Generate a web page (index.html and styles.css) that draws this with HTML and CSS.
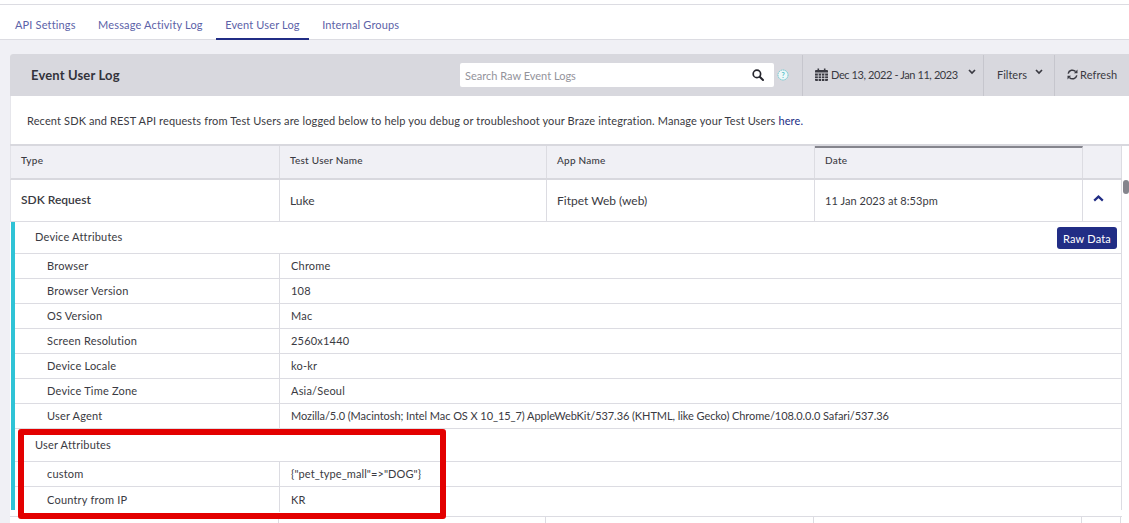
FILE: index.html
```html
<!DOCTYPE html>
<html lang="en">
<head>
    <meta charset="UTF-8">
    <title>Event User Log</title>
    <link rel="stylesheet" href="styles.css">
</head>
<body>
    <div class="top-strip"></div>
    <nav class="tabs">
        <a class="tab">API Settings</a>
        <a class="tab">Message Activity Log</a>
        <a class="tab active">Event User Log</a>
        <a class="tab">Internal Groups</a>
    </nav>
    <main class="content">
        <section class="panel">
            <header class="panel-head">
                <h1>Event User Log</h1>
                <div class="search">
                    <span class="search-text">Search Raw Event Logs</span>
                    <svg class="search-icon" width="12" height="12" viewBox="0 0 12 12"><circle cx="4.9" cy="4.9" r="3.7" fill="none" stroke="#26262e" stroke-width="1.7"/><path d="M7.7 7.7 11 11" stroke="#26262e" stroke-width="2" stroke-linecap="round"/></svg>
                </div>
                <svg class="help" width="12" height="12" viewBox="0 0 12 12"><circle cx="6" cy="6" r="5" fill="#eef8f9" stroke="#6fcbd3" stroke-width="1" stroke-dasharray="1.6 .7"/><text x="6" y="8.6" text-anchor="middle" class="help-mark">?</text></svg>
                <div class="tool tool-date">
                    <svg width="13" height="13" viewBox="0 0 13 13"><path fill="#3a3a42" d="M0 3a1 1 0 0 1 1-1h1.5V.5h1.6V2h4.8V.5h1.6V2H12a1 1 0 0 1 1 1v1.6H0zM0 5.4h13V12a1 1 0 0 1-1 1H1a1 1 0 0 1-1-1z"/><path stroke="#d8d8de" stroke-width=".8" d="M0 8h13M0 10.5h13M3.3 5.4V13M6.5 5.4V13M9.7 5.4V13"/></svg>
                    <span>Dec 13, 2022 - Jan 11, 2023</span>
                    <svg class="caret" width="8" height="6" viewBox="0 0 8 6"><path d="M1 1 4 4 7 1" fill="none" stroke="#3a3a42" stroke-width="1.7"/></svg>
                </div>
                <div class="tool tool-filters">
                    <span>Filters</span>
                    <svg class="caret" width="8" height="6" viewBox="0 0 8 6"><path d="M1 1 4 4 7 1" fill="none" stroke="#3a3a42" stroke-width="1.7"/></svg>
                </div>
                <div class="tool tool-refresh">
                    <svg width="11" height="11" viewBox="0 0 11 11"><path d="M1.2 4.6A4.3 4.3 0 0 1 8.6 2.6M9.8 6.4A4.3 4.3 0 0 1 2.4 8.4" fill="none" stroke="#3a3a42" stroke-width="1.5"/><path d="M10.5.6v3.6H6.9zM.5 10.4V6.8h3.6z" fill="#3a3a42"/></svg>
                    <span>Refresh</span>
                </div>
            </header>

            <p class="intro">Recent SDK and REST API requests from Test Users are logged below to help you debug or troubleshoot your Braze integration. Manage your Test Users <a>here.</a></p>

            <div class="table-wrap">
                <div class="table">
                    <div class="row row-head">
                        <div class="cell">Type</div>
                        <div class="cell">Test User Name</div>
                        <div class="cell">App Name</div>
                        <div class="cell cell-sorted">Date</div>
                        <div class="cell"></div>
                    </div>
                    <div class="row row-event">
                        <div class="cell cell-type">SDK Request</div>
                        <div class="cell">Luke</div>
                        <div class="cell">Fitpet Web (web)</div>
                        <div class="cell cell-date">11 Jan 2023 at 8:53pm</div>
                        <div class="cell cell-toggle">
                            <svg width="11" height="7" viewBox="0 0 11 7"><path d="M1.2 5.6 5.5 1.6l4.3 4" fill="none" stroke="#212d85" stroke-width="2.2"/></svg>
                        </div>
                    </div>

                    <div class="details">
                        <div class="group-title group-first">
                            <span>Device Attributes</span>
                            <button class="raw-btn">Raw Data</button>
                        </div>
                        <div class="pair"><div class="key">Browser</div><div class="val">Chrome</div></div>
                        <div class="pair"><div class="key">Browser Version</div><div class="val">108</div></div>
                        <div class="pair"><div class="key">OS Version</div><div class="val">Mac</div></div>
                        <div class="pair"><div class="key">Screen Resolution</div><div class="val">2560x1440</div></div>
                        <div class="pair"><div class="key">Device Locale</div><div class="val">ko-kr</div></div>
                        <div class="pair"><div class="key">Device Time Zone</div><div class="val">Asia/Seoul</div></div>
                        <div class="pair"><div class="key">User Agent</div><div class="val val-long">Mozilla/5.0 (Macintosh; Intel Mac OS X 10_15_7) AppleWebKit/537.36 (KHTML, like Gecko) Chrome/108.0.0.0 Safari/537.36</div></div>
                        <div class="group-title"><span>User Attributes</span></div>
                        <div class="pair"><div class="key">custom</div><div class="val val-code">{"pet_type_mall"=&gt;"DOG"}</div></div>
                        <div class="pair pair-last"><div class="key">Country from IP</div><div class="val">KR</div></div>
                    </div>

                    <div class="row row-next">
                        <div class="cell"></div><div class="cell"></div><div class="cell"></div><div class="cell"></div><div class="cell"></div>
                    </div>
                </div>
                <div class="scroll-track"><div class="scroll-thumb"></div></div>
            </div>
        </section>
    </main>
    <div class="callout"></div>
</body>
</html>
```

FILE: styles.css
```css
* {
    box-sizing: border-box;
}
html, body {
    height: 523px;
    overflow: hidden;
}
body {
    margin: 0;
    background: #f0f0f5;
    color: #3a3a42;
    font-family: Lato, "Liberation Sans", sans-serif;
    font-size: 11px;
    position: relative;
}
.top-strip {
    height: 5px;
    background: #fff;
    border-bottom: 1px solid #dcdce2;
}
.tabs {
    height: 35px;
    background: #fff;
    border-bottom: 1px solid #dcdce2;
    display: flex;
    padding-left: 6px;
}
.tab {
    height: 35px;
    padding: 13px 9px 0;
    margin-right: 4.5px;
    color: #5c62a8;
    letter-spacing: .15px;
}
.tab.active {
    border-bottom: 2px solid #212d85;
}
.content {
    padding: 14px 0 0 10px;
}
.panel {
    background: #fff;
    border-radius: 3px 0 0 0;
}
.panel-head {
    height: 42px;
    background: #d8d8de;
    display: flex;
    align-items: center;
    border-radius: 3px 0 0 0;
}
.panel-head h1 {
    margin: 0;
    width: 450px;
    padding-left: 21px;
    font-size: 13px;
    font-weight: 700;
    letter-spacing: .15px;
    color: #33333b;
}
.search {
    width: 314px;
    height: 24px;
    background: #fff;
    border-radius: 2px;
    display: flex;
    align-items: center;
    justify-content: space-between;
    padding: 0 10px 0 5px;
    color: #93939b;
}
.help {
    margin-left: 3px;
    margin-right: 13px;
}
.help-mark {
    font-size: 7px;
    font-weight: 700;
    fill: #55bfc9;
}
.tool {
    height: 41px;
    display: flex;
    align-items: center;
    border-left: 1px solid #c6c6cd;
    white-space: nowrap;
    padding-bottom: 2px;
}
.tool-date {
    width: 181px;
    padding-left: 12px;
}
.tool-date span {
    margin-left: 3px;
    margin-right: 10px;
    letter-spacing: -.4px;
}
.tool-filters {
    width: 71px;
    padding-left: 13px;
}
.tool-filters span {
    margin-right: 8px;
}
.tool-refresh {
    flex: 1;
    padding-left: 12px;
}
.tool-refresh span {
    margin-left: 2px;
    letter-spacing: .1px;
}
.caret {
    position: relative;
    top: -2px;
}
.intro {
    margin: 0;
    height: 48px;
    padding: 18px 0 0 16px;
    border-left: 1px solid #e6e6eb;
    color: #3a3a42;
    letter-spacing: .13px;
}
.intro a {
    color: #212d85;
}
.table-wrap {
    display: flex;
    border-top: 2px solid #d8d8de;
}
.table {
    width: 1112px;
    flex-shrink: 0;
}
.row {
    display: grid;
    grid-template-columns: 269px 267px 268px 268px 39px;
}
.cell {
    display: flex;
    align-items: center;
    padding-left: 10px;
    border-right: 1px solid #dcdce2;
}
.row-head {
    height: 34px;
    background: #f0f0f5;
    border-bottom: 2px solid #d8d8de;
    border-left: 1px solid #e2e2e8;
    font-size: 10px;
    font-weight: 500;
    letter-spacing: .25px;
}
.row-head .cell {
    height: 32px;
    padding-bottom: 5px;
}
.row-head .cell-sorted {
    border-top: 2px solid #85858d;
    padding-bottom: 7px;
}
.row-event {
    height: 42px;
    border-bottom: 1px solid #dcdce2;
    border-left: 1px solid #e2e2e8;
    background: #fff;
    font-size: 12px;
}
.row-event .cell {
    height: 41px;
}
.cell-type {
    font-weight: 600;
    padding-bottom: 2px;
}
.cell-date {
    font-size: 11px;
    letter-spacing: .05px;
}
.cell-toggle {
    padding-left: 10px;
    padding-bottom: 4px;
}
.details {
    height: 288px;
    margin-left: 1px;
    border-left: 4px solid #2fc3d6;
    background: #fff;
    border-right: 1px solid #dcdce2;
    letter-spacing: .2px;
}
.group-title {
    height: 33px;
    padding: 0 4px 1px 20px;
    display: flex;
    align-items: center;
    justify-content: space-between;
    border-bottom: 1px solid #dcdce2;
}
.group-first {
    height: 32px;
    padding-bottom: 2px;
}
.raw-btn {
    height: 22px;
    width: 60px;
    padding: 0;
    border: none;
    border-radius: 3px;
    background: #212d85;
    color: #fff;
    font: inherit;
    letter-spacing: .2px;
    align-self: flex-start;
    margin-top: 5px;
}
.pair {
    height: 25px;
    display: flex;
    border-bottom: 1px solid #dcdce2;
}
.pair-last {
    border-bottom: none;
}
.key {
    width: 265px;
    padding: 0 0 1px 32px;
    display: flex;
    align-items: center;
    border-right: 1px solid #dcdce2;
}
.val {
    padding: 0 0 1px 11px;
    display: flex;
    align-items: center;
}
.val-long {
    letter-spacing: -.07px;
}
.val-code {
    letter-spacing: .08px;
}
.row-next {
    margin-top: 6px;
    height: 10px;
    background: #fff;
    border-top: 1px solid #dcdce2;
}
.scroll-track {
    width: 7px;
    padding-left: 1px;
    background: #fff;
}
.scroll-thumb {
    margin-top: 34px;
    width: 6px;
    height: 14px;
    border-radius: 3px;
    background: #85858d;
}
.callout {
    position: absolute;
    left: 18px;
    top: 429px;
    width: 428px;
    height: 90px;
    border: 6px solid #e30000;
    border-radius: 3px;
}
```
